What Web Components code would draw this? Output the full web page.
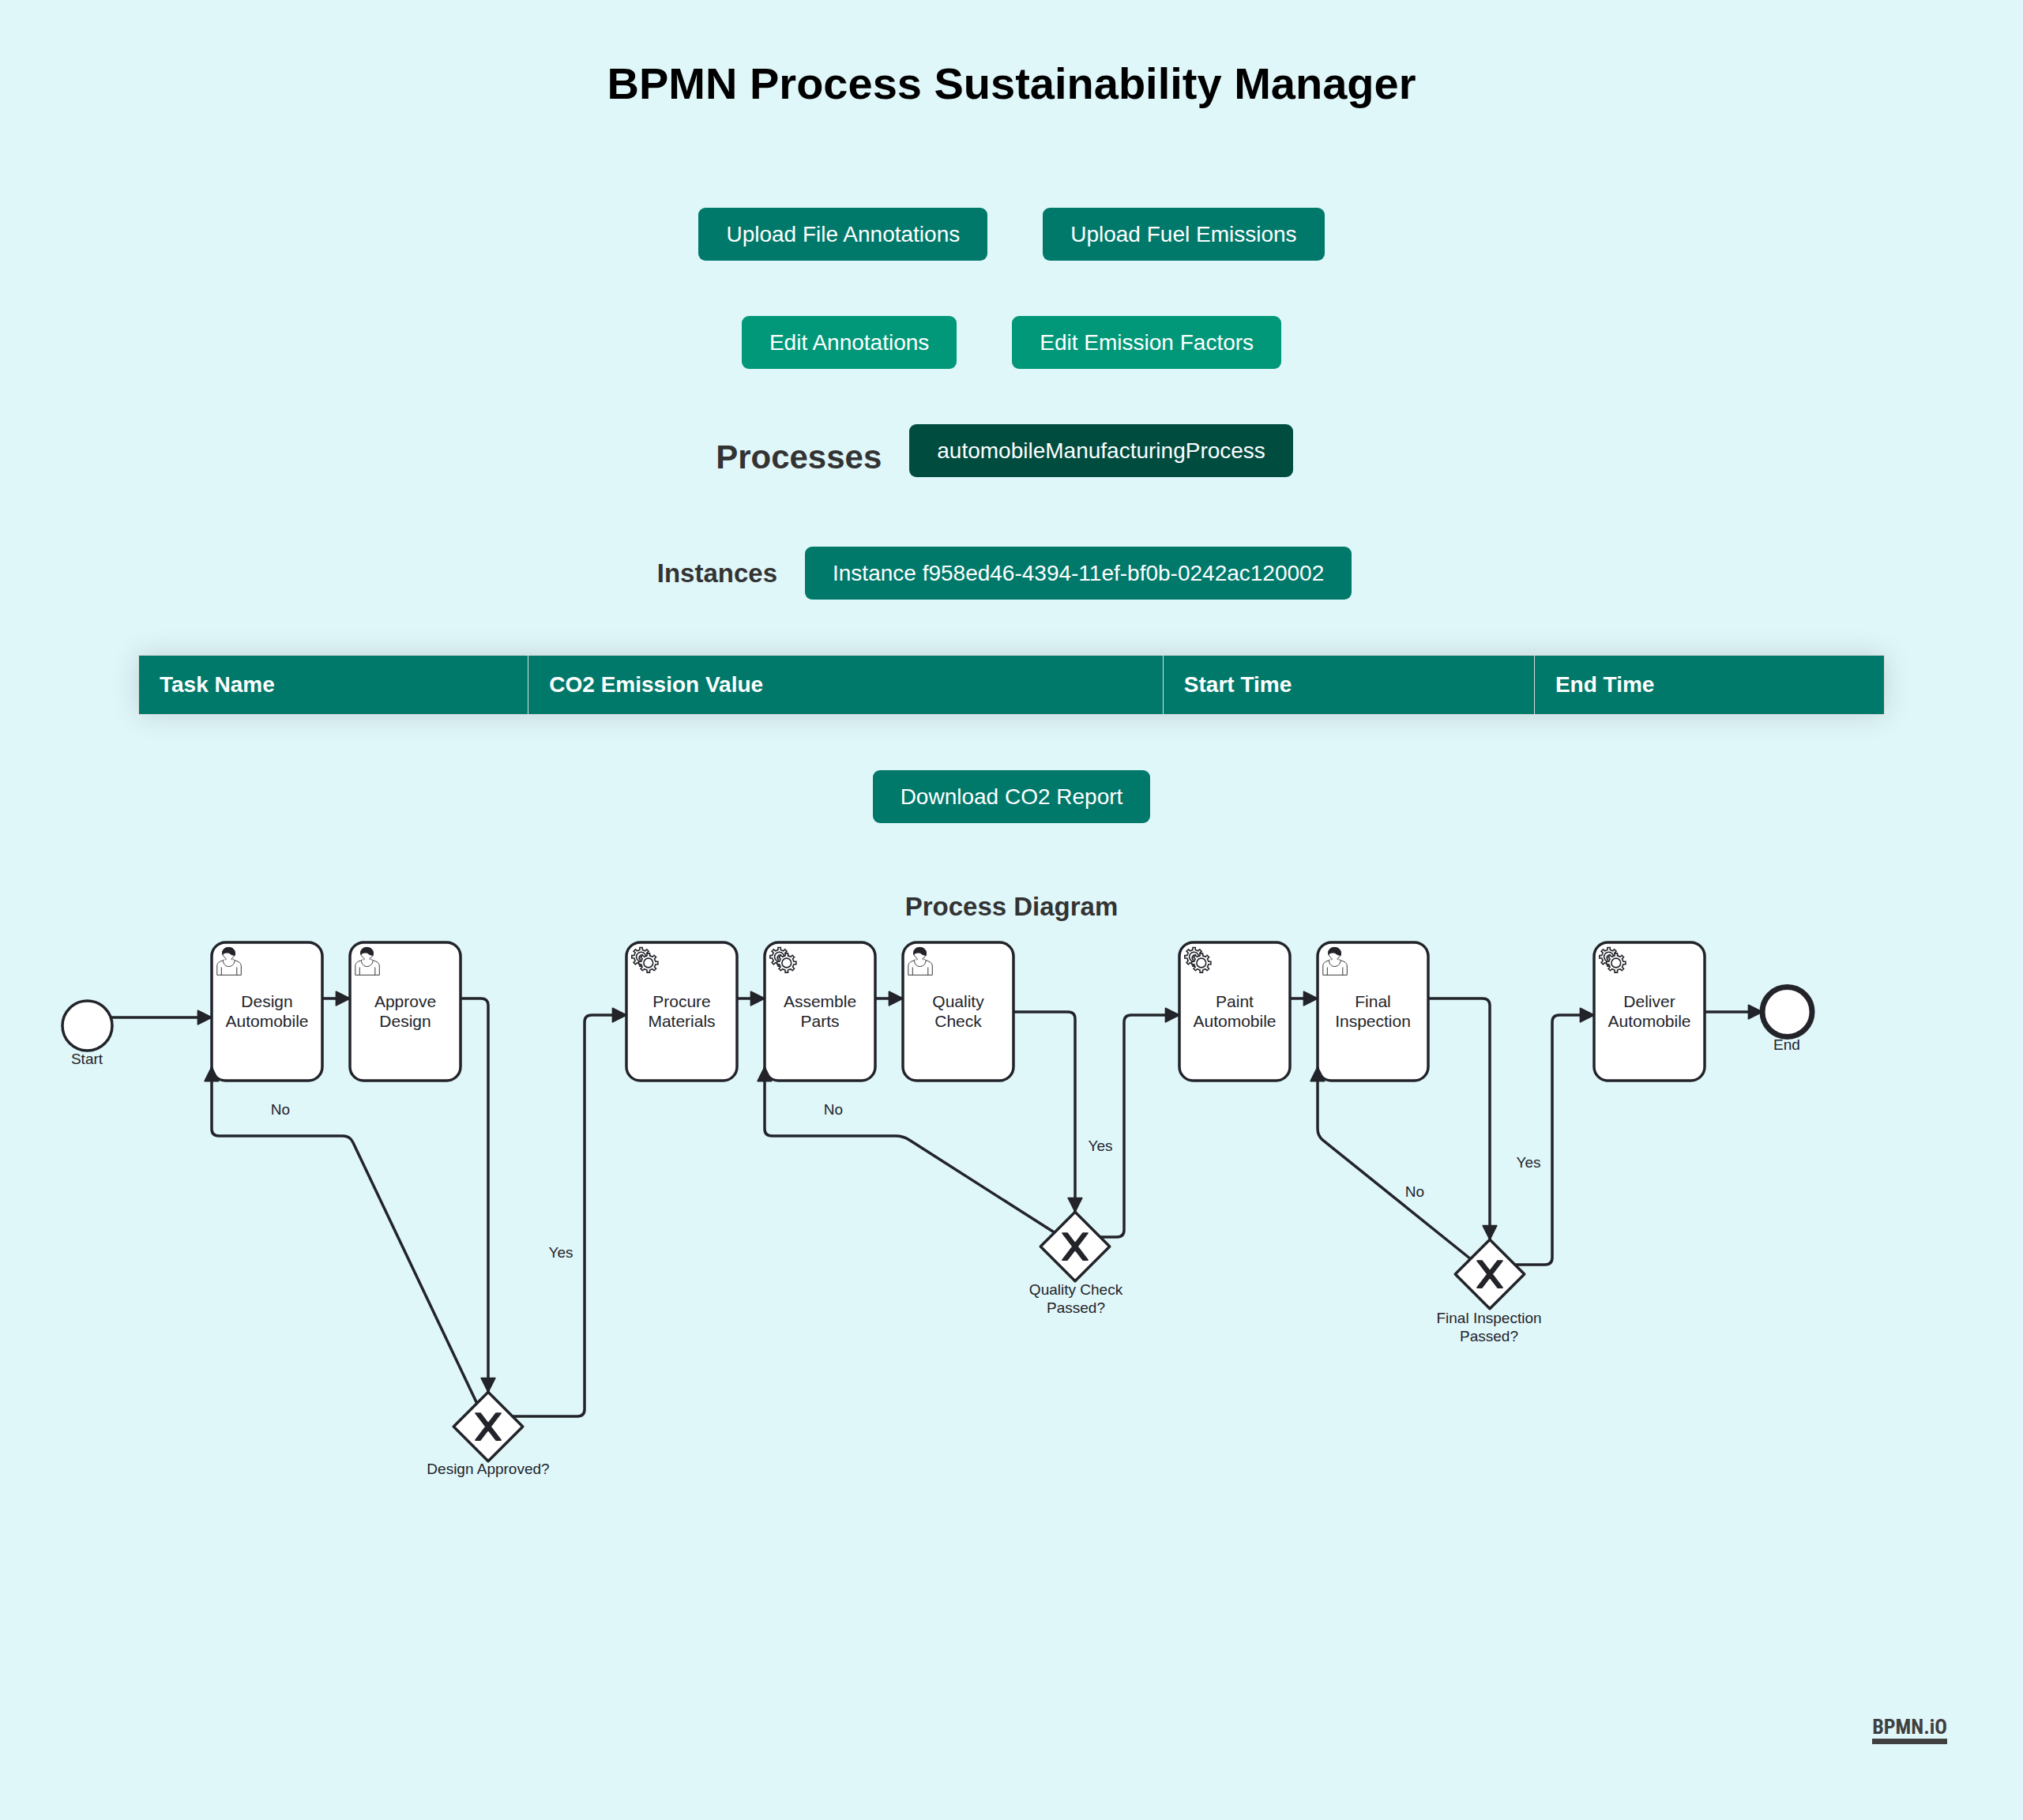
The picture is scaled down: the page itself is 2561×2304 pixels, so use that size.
<!DOCTYPE html>
<html lang="en">
<head>
<meta charset="utf-8">
<title>BPMN Process Sustainability Manager</title>
<style>
  html { background: #e0f7fa; }
  body { margin: 0; font-family: Arial, "Liberation Sans", sans-serif; color: #333; }
</style>
</head>
<body>
<sustainability-app></sustainability-app>

<script>
const define = (name, html, setup) => {
  const template = document.createElement('template');
  template.innerHTML = html;
  customElements.define(name, class extends HTMLElement {
    constructor() {
      super();
      this.attachShadow({ mode: 'open' }).append(template.content.cloneNode(true));
      if (setup) setup(this);
    }
  });
};

define('action-button', `
  <style>
    :host { display: block; --fill: #00796b; }
    :host([tone="edit"]) { --fill: #009879; }
    :host([tone="selected"]) { --fill: #004d40; }
    button { display: block; margin: 0; border: 0; border-radius: 9px; padding: 17px 35px;
      background: var(--fill); color: #fff; font: 28px/33px Arial, "Liberation Sans", sans-serif;
      white-space: nowrap; cursor: pointer; }
  </style>
  <button type="button"><slot></slot></button>`);

define('button-row', `
  <style>:host { display: flex; justify-content: center; flex-wrap: wrap; gap: 70px; }</style>
  <slot></slot>`);

define('choice-row', `
  <style>
    :host { display: flex; justify-content: center; align-items: flex-start; gap: 35px; padding-right: 18px; }
    ::slotted(h2) { margin: 0; padding-bottom: 2px; font-size: 42px; line-height: 83px; }
    ::slotted(h3) { margin: 0; font-size: 33px; line-height: 67px; }
  </style>
  <slot></slot>`);

define('emission-table', `
  <style>
    :host { display: block; margin: 0 105px; }
    table { width: 100%; border-collapse: collapse; box-shadow: 0 0 35px rgba(0, 0, 0, .15); }
    th { padding: 21px 26px; border: 1px solid #ddd; background: #00796b; color: #fff;
      font-size: 28px; line-height: 32px; text-align: left; }
  </style>
  <table>
    <thead><tr>
      <th scope="col">Task Name</th><th scope="col">CO2 Emission Value</th>
      <th scope="col">Start Time</th><th scope="col">End Time</th>
    </tr></thead>
    <tbody></tbody>
  </table>`);

define('bpmn-logo', `
  <style>
    :host { display: block; }
    a { display: block; color: #404040; border-bottom: 7px solid #404040; text-decoration: none;
      font: bold 26px/30px "Roboto Condensed", "Liberation Sans Narrow", "Liberation Sans", sans-serif; }
  </style>
  <a href="#bpmn-io">BPMN.iO</a>`);

/* ---- process model ---- */
const tasks = [
  [198, 'user', 'Design', 'Automobile'], [373, 'user', 'Approve', 'Design'],
  [723, 'service', 'Procure', 'Materials'], [898, 'service', 'Assemble', 'Parts'],
  [1073, 'user', 'Quality', 'Check'], [1423, 'service', 'Paint', 'Automobile'],
  [1598, 'user', 'Final', 'Inspection'], [1948, 'service', 'Deliver', 'Automobile']
];
const gateways = [[548, 622], [1291, 394], [1816, 429]];
const flows = [
  [[70, 104], [198, 104]],
  [[338, 80], [373, 80]],
  [[513, 80], [548, 80], [548, 578]],
  [[534, 593], [373, 254], [198, 254], [198, 167]],
  [[579, 609], [670, 609], [670, 101], [723, 101]],
  [[863, 80], [898, 80]],
  [[1038, 80], [1073, 80]],
  [[1213, 97], [1291, 97], [1291, 350]],
  [[1266, 377], [1073, 254], [898, 254], [898, 167]],
  [[1322, 382], [1353, 382], [1353, 101], [1423, 101]],
  [[1563, 80], [1598, 80]],
  [[1738, 80], [1816, 80], [1816, 385]],
  [[1792, 410], [1598, 254], [1598, 167]],
  [[1847, 417], [1895, 417], [1895, 101], [1948, 101]],
  [[2088, 97], [2161, 97]]
];
const labels = [
  [40, 163, 'Start'], [2192, 145, 'End'],
  [285, 227, 'No'], [985, 227, 'No'], [1721, 331, 'No'],
  [640, 408, 'Yes'], [1323, 273, 'Yes'], [1865, 294, 'Yes'],
  [548, 682, 'Design Approved?'],
  [1292, 455, 'Quality Check'], [1292, 478, 'Passed?'],
  [1815, 491, 'Final Inspection'], [1815, 514, 'Passed?']
];

/* Sequence flow with its bends rounded off. */
const flowPath = (points, radius = 9) => points.map((p, i) => {
  if (i === 0) return 'M' + p;
  if (i === points.length - 1) return 'L' + p;
  const toward = q => {
    const d = Math.hypot(q[0] - p[0], q[1] - p[1]);
    return [p[0] + (q[0] - p[0]) * radius / d, p[1] + (q[1] - p[1]) * radius / d];
  };
  return `L${toward(points[i - 1])}Q${p} ${toward(points[i + 1])}`;
}).join('');

/* Outline of an eight-toothed gear. */
const gear = (cx, cy, tip, root) => {
  const points = [];
  for (let i = 0; i < 8; i++) {
    for (const [offset, r] of [[-11, root], [-8, tip], [8, tip], [11, root]]) {
      const a = (i * 45 + offset) * Math.PI / 180;
      points.push((cx + r * Math.cos(a)).toFixed(2) + ',' + (cy + r * Math.sin(a)).toFixed(2));
    }
  }
  return `<polygon points="${points.join(' ')}"/>`;
};

const icons = {
  user: `<g class="person">
      <path d="M16.2 21.4C15 22.6 14.6 22.7 13.6 23.1C9 24.6 7 26 6.8 30V41.3H37.3V30C37 26 34.6 24.4 29.4 22.8C28.4 22.5 27.4 21.8 26.6 21"/>
      <path d="M14.4 22.8C14.6 27.5 17.6 30.5 21.6 30.5S28.8 27.5 29.2 22.8"/>
      <path d="M12.3 31.5V41.3M31.8 31.5V41.3"/>
      <path d="M17.6 22.4C18.4 21.4 18.2 20.6 17.4 19.8C15 18 13.6 15.5 13.6 13.6C13.6 9.4 17 6.5 21.5 6.5S29.6 9.6 29.6 14C29.6 16.4 27.6 19 25.6 20C25 20.7 25 21.4 25.8 22.2"/>
      <path class="hair" d="M13.7 15.4C12.8 9.6 16.6 6.3 21.4 6.3C26.6 6.3 30.4 10 29.2 16.4C26.8 16.4 24.6 15.6 22.6 13.8C19.8 12.6 16.4 12.8 13.7 15.4Z"/>
    </g>`,
  service: `<g class="gears">${gear(18.6, 18.3, 11.9, 9)}<circle cx="18.6" cy="18.3" r="6"/>
      <path d="M18 22.5A3.6 3.6 0 0 1 21 16"/>
      ${gear(27.8, 26, 12.2, 9.3)}<circle cx="27.8" cy="26" r="5.9"/></g>`
};

define('process-canvas', `
  <style>
    :host { display: block; position: relative; height: 1050px; overflow: hidden; }
    svg { display: block; width: 100%; height: 100%; fill: none; stroke: #22242a; stroke-width: 3.5; stroke-linejoin: round; }
    rect, circle, .gateway { fill: #fff; }
    marker path { fill: #22242a; stroke-width: 1; }
    .cross { fill: #22242a; stroke-width: 1.75; }
    .person { stroke-width: .9; fill: #fff; }
    .person .hair { fill: #22242a; }
    .gears { stroke-width: 1.6; fill: #fff; stroke-linejoin: miter; }
    text { fill: #22242a; stroke: none; text-anchor: middle; font: 21px Arial, "Liberation Sans", sans-serif; }
    text.small { font-size: 19px; }
    bpmn-logo { position: absolute; right: 26px; bottom: 26px; }
  </style>
  <svg role="img" aria-label="Automobile manufacturing process">
    <defs><marker id="arrow" viewBox="0 0 20 20" refX="11" refY="10" markerWidth="10" markerHeight="10" orient="auto"><path d="M1 5L11 10L1 15Z"/></marker></defs>
    <circle cx="40.5" cy="114.5" r="31.5"/>
    <circle cx="2192.5" cy="97" r="31.5" stroke-width="7"/>
    ${tasks.map(([x, kind, a, b]) => `<g transform="translate(${x} 9)"><rect width="140" height="175" rx="17.5"/>${icons[kind]}
      <text x="70" y="82">${a}</text><text x="70" y="107">${b}</text></g>`).join('')}
    ${gateways.map(([x, y]) => `<g transform="translate(${x} ${y})"><path class="gateway" d="M0-43.75L43.75 0L0 43.75L-43.75 0Z"/>
      <path class="cross" d="M-16-17L-3 0L-16 17H-10L0 4L10 17H16L3 0L16-17H10L0-4L-10-17Z"/></g>`).join('')}
    ${flows.map(points => `<path d="${flowPath(points)}" marker-end="url(#arrow)"/>`).join('')}
    ${labels.map(([x, y, t]) => `<text class="small" x="${x}" y="${y}">${t}</text>`).join('')}
  </svg>
  <bpmn-logo></bpmn-logo>`);

define('process-diagram', `
  <style>
    :host { display: block; }
    h3 { margin: 0; text-align: center; font-size: 33px; line-height: 72px; }
  </style>
  <h3>Process Diagram</h3>
  <process-canvas></process-canvas>`);

define('sustainability-app', `
  <style>
    :host { display: block; }
    main { display: flex; flex-direction: column; gap: 70px; padding: 70px; }
    h1 { margin: 0 0 51px; color: #000; text-align: center; font-size: 56px; line-height: 72px; }
  </style>
  <main>
    <h1>BPMN Process Sustainability Manager</h1>
    <button-row>
      <action-button>Upload File Annotations</action-button>
      <action-button>Upload Fuel Emissions</action-button>
    </button-row>
    <button-row>
      <action-button tone="edit">Edit Annotations</action-button>
      <action-button tone="edit">Edit Emission Factors</action-button>
    </button-row>
    <choice-row>
      <h2>Processes</h2>
      <action-button tone="selected">automobileManufacturingProcess</action-button>
    </choice-row>
    <choice-row>
      <h3>Instances</h3>
      <action-button>Instance f958ed46-4394-11ef-bf0b-0242ac120002</action-button>
    </choice-row>
    <emission-table></emission-table>
    <button-row><action-button>Download CO2 Report</action-button></button-row>
    <process-diagram></process-diagram>
  </main>`);
</script>
</body>
</html>
